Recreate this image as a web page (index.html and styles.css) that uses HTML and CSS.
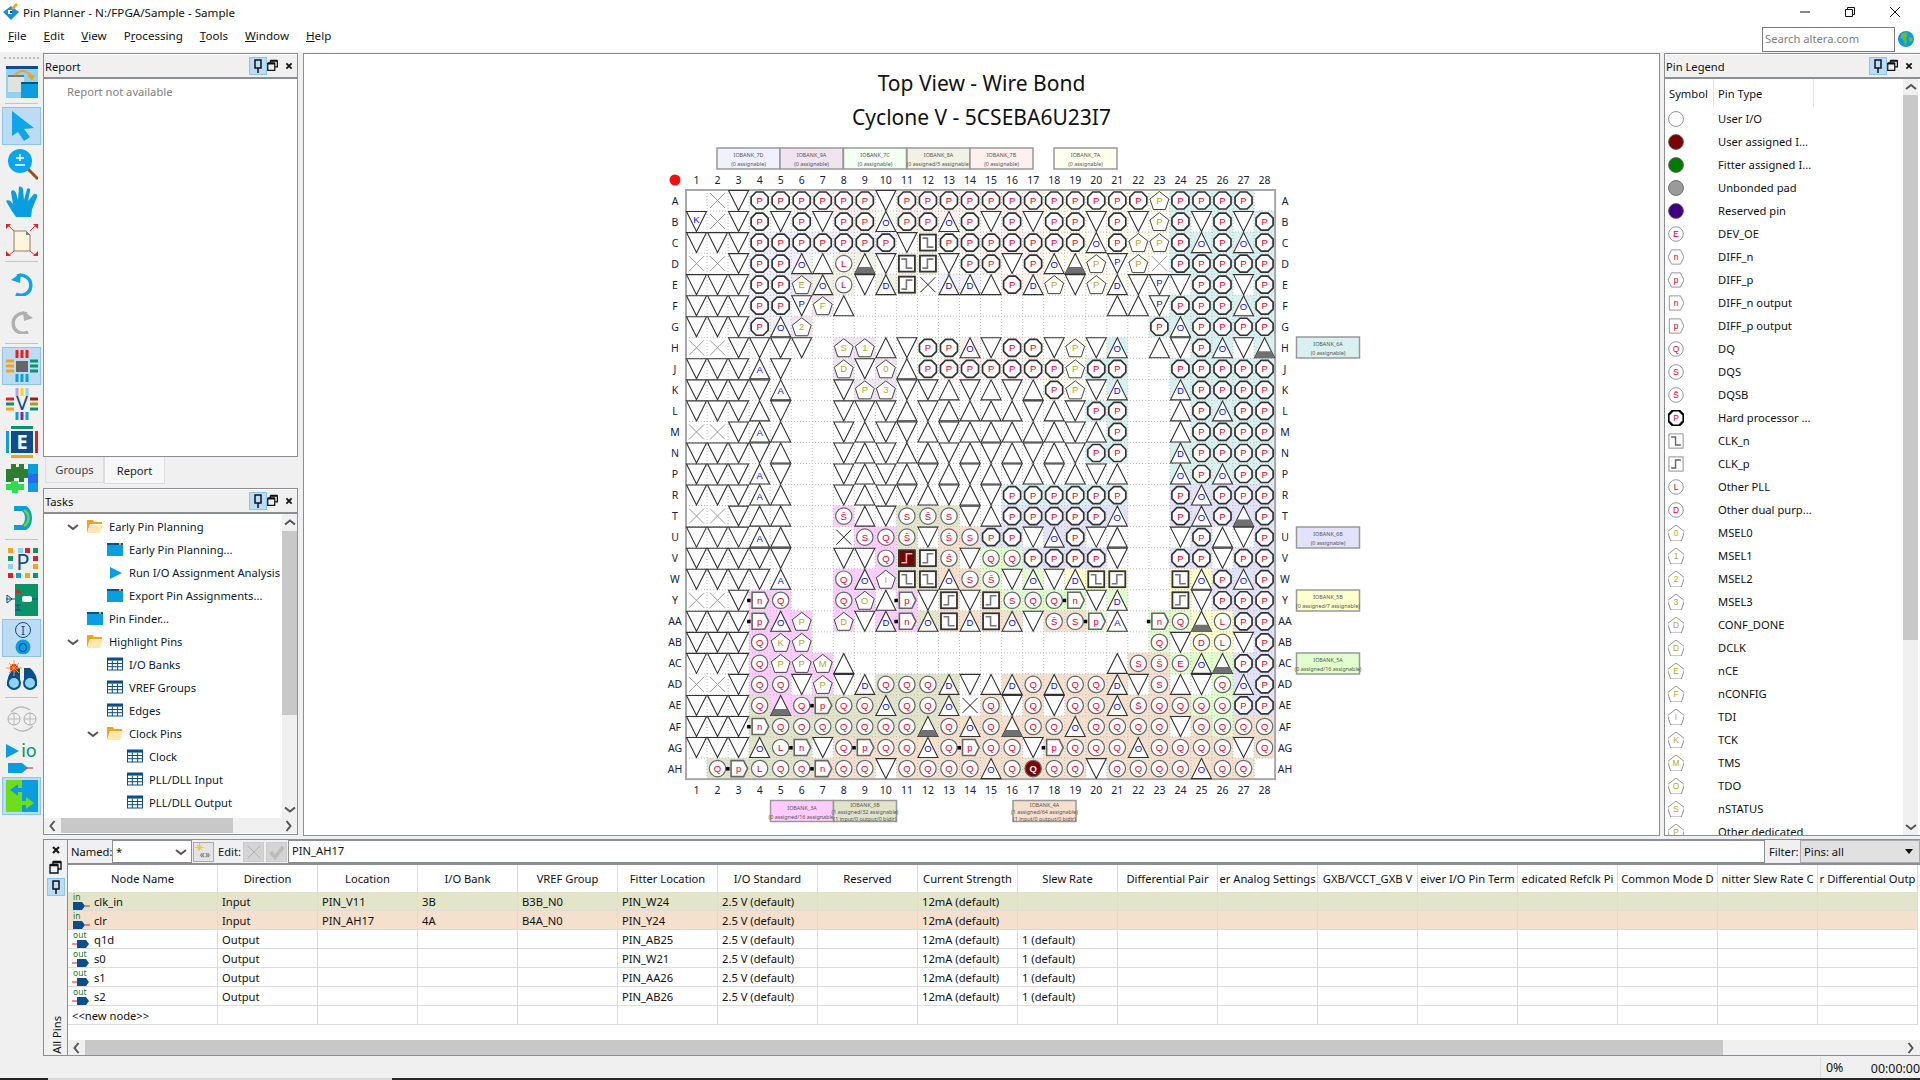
FILE: index.html
```html
<!DOCTYPE html>
<html lang="en">
<head>
<meta charset="utf-8">
<title>Pin Planner - N:/FPGA/Sample - Sample</title>
<link rel="stylesheet" href="styles.css">
</head>
<body>
<svg class="defs" width="0" height="0">
  <symbol id="i-pin" viewBox="0 0 16 16"><path d="M5 2H11V10H5ZM8 10V15" fill="none" stroke="#111" stroke-width="1.5"/></symbol>
  <symbol id="i-restore" viewBox="0 0 16 16"><path d="M5 5V2H13V9H10M2 5H10V13H2Z" fill="none" stroke="#111" stroke-width="1.4"/><path d="M2 5H10M5 2H13" stroke="#111" stroke-width="2.4"/></symbol>
  <symbol id="i-close" viewBox="0 0 16 16"><path d="M5 5L11 11M11 5L5 11" stroke="#111" stroke-width="2"/></symbol>
  <symbol id="i-up" viewBox="0 0 14 14"><path d="M2 9L7 5L12 9" fill="none" stroke="#555" stroke-width="2"/></symbol>
  <symbol id="i-down" viewBox="0 0 14 14"><path d="M2 5L7 9L12 5" fill="none" stroke="#555" stroke-width="2"/></symbol>
  <symbol id="i-left" viewBox="0 0 14 14"><path d="M9 2L5 7L9 12" fill="none" stroke="#555" stroke-width="2"/></symbol>
  <symbol id="i-right" viewBox="0 0 14 14"><path d="M5 2L9 7L5 12" fill="none" stroke="#555" stroke-width="2"/></symbol>
  <symbol id="i-folder" viewBox="0 0 16 16"><path d="M0 1H6L7 3H15V5H3L0 14Z" fill="#f7a11a"/><path d="M3 6H16L13 14H0Z" fill="#fde9b0"/></symbol>
  <symbol id="i-task" viewBox="0 0 16 16"><rect y="1" width="16" height="13" fill="#0a9de0"/><rect y="1" width="16" height="2" fill="#0a4f8c"/><rect x="12" y="1" width="2" height="2" fill="#f7a11a"/></symbol>
  <symbol id="i-play" viewBox="0 0 16 16"><path d="M3 2L15 8L3 14Z" fill="#0a9de0"/></symbol>
  <symbol id="i-table" viewBox="0 0 16 16"><rect x=".5" y="1" width="15" height="12" fill="#fff" stroke="#0a4f8c"/><rect y="1" width="16" height="2.6" fill="#0a4f8c"/><path d="M0 6.5H16M0 9.7H16M5.3 3.6V13M10.6 3.6V13" stroke="#0a4f8c"/></symbol>
</svg>

<div class="app">
  <header class="titlebar">
    <svg class="logo" viewBox="0 0 18 18"><path d="M9 3L17 9L9 17L1 9Z" fill="#1a8fd8"/><rect x="6" y="7" width="4" height="4" fill="#fff"/><rect x="8" y="8" width="2" height="2" fill="#0a4f8c"/><path d="M10 6L15 1" stroke="#f7a11a" stroke-width="2.5"/></svg>
    <span class="app-title">Pin Planner - N:/FPGA/Sample - Sample</span>
    <div class="winbtns">
      <svg class="winbtn" viewBox="0 0 10 10"><path d="M0 5H10" stroke="#111"/></svg>
      <svg class="winbtn" viewBox="0 0 10 10"><path d="M.5 2.5H7.5V9.5H.5ZM2.5 2.5V.5H9.5V7.5H7.5" fill="none" stroke="#111"/></svg>
      <svg class="winbtn" viewBox="0 0 10 10"><path d="M0 0L10 10M10 0L0 10" stroke="#111"/></svg>
    </div>
  </header>

  <nav class="menubar">
    <span class="menu"><u>F</u>ile</span>
    <span class="menu"><u>E</u>dit</span>
    <span class="menu"><u>V</u>iew</span>
    <span class="menu">P<u>r</u>ocessing</span>
    <span class="menu"><u>T</u>ools</span>
    <span class="menu"><u>W</u>indow</span>
    <span class="menu"><u>H</u>elp</span>
    <div class="search">Search altera.com</div>
    <svg class="globe" viewBox="0 0 16 16"><circle cx="8" cy="8" r="8" fill="#0a9de0"/><path d="M3 3L8 1L10 4L8 7L9 11L7 15L6 10L3 7ZM11 6L15 7L14 11L11 10Z" fill="#6dbb2d"/></svg>
  </nav>

  <div class="workspace">
    <aside class="toolbar">
      <div class="grip"></div>
      <div class="tool"><svg class="ti" viewBox="0 0 32 32"><rect width="32" height="32" fill="#8fd3f4"/><rect width="32" height="3" fill="#0a4f8c"/><rect x="2" y="9" width="16" height="17" fill="#e2e2dc"/><rect x="2" y="9" width="16" height="2" fill="#777"/><rect x="15" y="16" width="17" height="16" fill="#0a9de0"/><rect x="15" y="16" width="17" height="2" fill="#0a4f8c"/><path d="M9 9Q16 1 25 9" fill="none" stroke="#f7a11a" stroke-width="2"/><path d="M21 9L29 9L26 15Z" fill="#f7a11a"/></svg></div>
      <div class="sep"></div>
      <div class="tool on"><svg class="ti" viewBox="0 0 32 32"><path d="M6 1V26L12 22L18 31L24 27L18 19L28 18Z" fill="#0ea5e9"/></svg></div>
      <div class="tool"><svg class="ti" viewBox="0 0 32 32"><path d="M22 21L32 31" stroke="#a0491a" stroke-width="3"/><circle cx="14" cy="13" r="12" fill="#0aa5ee"/><path d="M14 6V13M10 10H18M9 17H19" stroke="#fff" stroke-width="1.5"/></svg></div>
      <div class="tool"><svg class="ti" viewBox="0 0 32 32"><path d="M10 31C6 26 3 20 0 15C2 13 5 15 7 18L5 6C6 3 9 4 10 7L12 14L13 1C15 0 16 1 17 3L18 14L21 3C23 1 25 3 24 5L22 15L28 8C30 7 32 9 31 11L27 21C25 25 26 28 25 31Z" fill="#0a9de0"/></svg></div>
      <div class="tool"><svg class="ti" viewBox="0 0 32 32"><path d="M8 7H20L24 11V27H8Z" fill="#fdf6dd" stroke="#96786a"/><path d="M20 7L24 11H20Z" fill="#96786a"/><path d="M8 7L2 1M24 7L30 1M8 27L2 32M24 27L30 32" stroke="#f03030"/><path d="M0 0H5L0 5ZM32 0H27L32 5ZM0 32H5L0 27ZM32 32H27L32 27Z" fill="#e82020"/></svg></div>
      <div class="sep"></div>
      <div class="tool"><svg class="ti small" viewBox="0 0 24 24"><path d="M7 4A10 10 0 1 1 6 22" fill="none" stroke="#0aa5ee" stroke-width="3.4"/><path d="M1 8L11 1L10 11Z" fill="#0aa5ee"/></svg></div>
      <div class="tool"><svg class="ti small" viewBox="0 0 24 24"><path d="M17 4A10 10 0 1 0 18 22" fill="none" stroke="#b0b0b0" stroke-width="3.4"/><path d="M23 8L13 1L14 11Z" fill="#b0b0b0"/></svg></div>
      <div class="sep"></div>
      <div class="tool on"><svg class="ti" viewBox="0 0 32 32"><rect x="10" y="11" width="12" height="11" fill="#666"/><path d="M11 0V8M16 0V8M21 0V8" stroke="#e81c24" stroke-width="3"/><path d="M11 24V32M16 24V32M21 24V32" stroke="#0a9de0" stroke-width="3"/><path d="M0 11H8M0 16H8M0 21H8" stroke="#f7a11a" stroke-width="3"/><path d="M24 11H32M24 16H32M24 21H32" stroke="#0a9268" stroke-width="3"/></svg></div>
      <div class="tool"><svg class="ti" viewBox="0 0 32 32"><path d="M11 0V8" stroke="#c79ae0" stroke-width="3"/><path d="M16 0V8" stroke="#f8d808" stroke-width="3"/><path d="M21 0V8" stroke="#8fd3f4" stroke-width="3"/><path d="M0 11H8" stroke="#e81c24" stroke-width="3"/><path d="M0 16H8" stroke="#0a9268" stroke-width="3"/><path d="M0 21H8" stroke="#f7a11a" stroke-width="3"/><path d="M24 11H32" stroke="#a01a1a" stroke-width="3"/><path d="M24 16H32" stroke="#a0a020" stroke-width="3"/><path d="M24 21H32" stroke="#0a9268" stroke-width="3"/><path d="M11 24V32" stroke="#0a9de0" stroke-width="3"/><path d="M16 24V32" stroke="#7030a0" stroke-width="3"/><path d="M21 24V32" stroke="#0a9de0" stroke-width="3"/><text class="ictext navy" x="16" y="22" font-size="20">V</text></svg></div>
      <div class="tool"><svg class="ti" viewBox="0 0 32 32"><rect x="5" y="5" width="22" height="22" fill="#0a4f8c"/><rect x="5" width="22" height="3" fill="#0a9268"/><rect x="5" y="29" width="22" height="3" fill="#f7a11a"/><rect y="5" width="3" height="22" fill="#0a9de0"/><rect x="29" y="5" width="3" height="22" fill="#e81c24"/><text class="ictext white" x="16" y="23" font-size="20">E</text></svg></div>
      <div class="tool"><svg class="ti" viewBox="0 0 32 32"><rect x="22" width="10" height="28" fill="#0a9de0"/><rect x="22" y="10" width="10" height="9" fill="#2a6af0"/><path d="M0 5H5V0H10V3H13V0H18V5H22V14H18V18H13V14H8V18H0Z" fill="#2e7d32"/><path d="M0 20H5V17H12V20H18V26H12V29H6V26H0Z" fill="#28e04a"/></svg></div>
      <div class="tool"><svg class="ti" viewBox="0 0 32 32"><path d="M8 4H20C28 8 28 24 20 28H8V23H16C20 20 20 12 16 9H8Z" fill="#0a9de0"/><path d="M18 8C24 12 24 20 18 24" fill="none" stroke="#6fdc1c" stroke-width="2.5"/></svg></div>
      <div class="sep"></div>
      <div class="tool"><svg class="ti" viewBox="0 0 32 32"><rect x="2" y="2" width="5" height="5" fill="#f7a11a"/><rect x="12" y="2" width="5" height="5" fill="#8fd3f4"/><rect x="19" y="2" width="5" height="5" fill="#e81c24"/><rect x="27" y="2" width="5" height="5" fill="#0a9268"/><rect x="2" y="10" width="5" height="5" fill="#0a9268"/><rect x="27" y="10" width="5" height="5" fill="#e81c24"/><rect x="2" y="18" width="5" height="5" fill="#8fd3f4"/><rect x="27" y="18" width="5" height="5" fill="#f7a11a"/><rect x="2" y="27" width="5" height="5" fill="#e81c24"/><rect x="10" y="27" width="5" height="5" fill="#0a9de0"/><rect x="19" y="27" width="5" height="5" fill="#f7a11a"/><rect x="27" y="27" width="5" height="5" fill="#0a9268"/><text class="ictext navy" x="17" y="24" font-size="22">P</text></svg></div>
      <div class="tool"><svg class="ti" viewBox="0 0 32 32"><rect x="9" width="23" height="32" fill="#0a9268"/><path d="M0 15H9M18 15H32" stroke="#0a4f8c"/><path d="M1 11L6 15L1 19Z" fill="none" stroke="#0a4f8c"/><rect x="16" y="12" width="10" height="6" rx="2" fill="#fff"/><path d="M12 5L15 9H9Z" fill="#e81c24"/><path d="M9 21H15M12 21V26M9 26H15" stroke="#0a4f8c"/></svg></div>
      <div class="tool on"><svg class="ti" viewBox="0 0 32 32"><circle cx="17" cy="8" r="7.5" fill="none" stroke="#0a4f8c"/><text class="ictext navy" x="17" y="12.5" font-size="12">I</text><circle cx="17" cy="25" r="7.5" fill="#0a9de0"/><text class="ictext navy" x="17" y="29.5" font-size="12">O</text></svg></div>
      <div class="tool"><svg class="ti" viewBox="0 0 32 32"><path d="M8 8H14V26H1Q1 14 8 8ZM18 8H24Q32 14 31 26H18Z" fill="#0a4f8c"/><circle cx="8" cy="23" r="6" fill="#8fd3f4" stroke="#0a4f8c" stroke-width="2"/><circle cx="24" cy="23" r="6" fill="#8fd3f4" stroke="#0a4f8c" stroke-width="2"/><circle cx="8" cy="8" r="4" fill="#e81c24"/><path d="M8 0V16M0 8H16M3 3L13 13M13 3L3 13" stroke="#f7a11a"/></svg></div>
      <div class="sep"></div>
      <div class="tool"><svg class="ti" viewBox="0 0 32 32"><circle cx="8" cy="15" r="6" fill="none" stroke="#aaa"/><circle cx="24" cy="15" r="6" fill="none" stroke="#aaa"/><path d="M2 15H14M8 9V21M18 15H30M24 9V21" stroke="#bbb"/><path d="M5 8Q14 -1 24 6M27 22Q18 31 8 24" fill="none" stroke="#bbb" stroke-width="1.5"/></svg></div>
      <div class="tool"><svg class="ti" viewBox="0 0 32 32"><path d="M0 2L13 9L0 16Z" fill="#0a9de0"/><text class="ictext green" x="23" y="15" font-size="18">io</text><path d="M2 21H16L22 26L16 31H2Z" fill="#0a9de0"/><path d="M20 26H27" stroke="#e81c24"/></svg></div>
      <div class="tool on"><svg class="ti" viewBox="0 0 32 32"><rect width="16" height="32" fill="#6fdc1c"/><rect x="16" width="16" height="32" fill="#0a9de0"/><path d="M4 10L12 4V8H20V12H12V16Z" fill="#0a9de0"/><path d="M28 23L20 17V21H16V25H20V29Z" fill="#6fdc1c"/></svg></div>
    </aside>

    <div class="stage">
      <div class="upper">
        <div class="leftcol">
          <section class="panel report">
            <div class="panel-head"><span class="panel-title">Report</span>
              <span class="pinbtn"><svg class="hi"><use href="#i-pin"/></svg></span><svg class="hi"><use href="#i-restore"/></svg><svg class="hi"><use href="#i-close"/></svg></div>
            <div class="report-body">Report not available</div>
          </section>
          <div class="tabs"><span class="tab">Groups</span><span class="tab sel">Report</span></div>
          <section class="panel tasks">
            <div class="panel-head"><span class="panel-title">Tasks</span>
              <span class="pinbtn"><svg class="hi"><use href="#i-pin"/></svg></span><svg class="hi"><use href="#i-restore"/></svg><svg class="hi"><use href="#i-close"/></svg></div>
            <div class="tasks-main">
              <div class="tree">
                <div class="node l0"><svg class="caret"><use href="#i-down"/></svg><svg class="ni"><use href="#i-folder"/></svg>Early Pin Planning</div>
                <div class="node l1"><span class="caret"></span><svg class="ni"><use href="#i-task"/></svg>Early Pin Planning...</div>
                <div class="node l1"><span class="caret"></span><svg class="ni"><use href="#i-play"/></svg>Run I/O Assignment Analysis</div>
                <div class="node l1"><span class="caret"></span><svg class="ni"><use href="#i-task"/></svg>Export Pin Assignments...</div>
                <div class="node l0"><span class="caret"></span><svg class="ni"><use href="#i-task"/></svg>Pin Finder...</div>
                <div class="node l0"><svg class="caret"><use href="#i-down"/></svg><svg class="ni"><use href="#i-folder"/></svg>Highlight Pins</div>
                <div class="node l1"><span class="caret"></span><svg class="ni"><use href="#i-table"/></svg>I/O Banks</div>
                <div class="node l1"><span class="caret"></span><svg class="ni"><use href="#i-table"/></svg>VREF Groups</div>
                <div class="node l1"><span class="caret"></span><svg class="ni"><use href="#i-table"/></svg>Edges</div>
                <div class="node l1"><svg class="caret"><use href="#i-down"/></svg><svg class="ni"><use href="#i-folder"/></svg>Clock Pins</div>
                <div class="node l2"><span class="caret"></span><svg class="ni"><use href="#i-table"/></svg>Clock</div>
                <div class="node l2"><span class="caret"></span><svg class="ni"><use href="#i-table"/></svg>PLL/DLL Input</div>
                <div class="node l2"><span class="caret"></span><svg class="ni"><use href="#i-table"/></svg>PLL/DLL Output</div>
              </div>
              <div class="vscroll tasks-v"><svg class="arrow"><use href="#i-up"/></svg><div class="thumb"></div><svg class="arrow"><use href="#i-down"/></svg></div>
            </div>
            <div class="hscroll tasks-h"><svg class="arrow"><use href="#i-left"/></svg><div class="hthumb"></div><svg class="arrow"><use href="#i-right"/></svg></div>
          </section>
        </div>

        <main class="chip-view">
          <h1 class="chip-title">Top View - Wire Bond</h1>
          <h2 class="chip-title second">Cyclone V - 5CSEBA6U23I7</h2>
          <svg id="chip" class="chip" viewBox="304 54 1355 781"></svg>
        </main>

        <aside class="panel legend">
          <div class="panel-head"><span class="panel-title">Pin Legend</span>
            <span class="pinbtn"><svg class="hi"><use href="#i-pin"/></svg></span><svg class="hi"><use href="#i-restore"/></svg><svg class="hi"><use href="#i-close"/></svg></div>
          <div class="legend-main">
            <div class="legend-list">
              <div class="legend-cols"><span class="lc-sym">Symbol</span><span class="lc-type">Pin Type</span></div>
              <div id="legend"></div>
            </div>
            <div class="vscroll legend-v"><svg class="arrow"><use href="#i-up"/></svg><div class="thumb"></div><svg class="arrow"><use href="#i-down"/></svg></div>
          </div>
        </aside>
      </div>

      <section class="dock">
        <div class="dock-side">
          <svg class="hi"><use href="#i-close"/></svg>
          <svg class="hi"><use href="#i-restore"/></svg>
          <span class="pinbtn"><svg class="hi"><use href="#i-pin"/></svg></span>
          <span class="vlabel">All Pins</span>
        </div>
        <div class="dock-main">
          <div class="dock-bar">
            <span class="lbl named">Named:</span>
            <div class="combo"><span>*</span><svg class="arrow"><use href="#i-down"/></svg></div>
            <div class="wiz"><svg viewBox="0 0 20 20" class="wiz-i"><path d="M5 0V9M0 5H10M2 2L8 8M8 2L2 8" stroke="#f7c11a"/><text class="ictext grey" x="11" y="17" font-size="11">«»</text></svg></div>
            <span class="lbl edit">Edit:</span>
            <div class="gbtn"><svg viewBox="0 0 20 20" class="wiz-i"><path d="M3 3L17 17M17 3L3 17" stroke="#aaa"/></svg></div>
            <div class="gbtn second"><svg viewBox="0 0 20 20" class="wiz-i"><path d="M3 10L8 16L17 4" fill="none" stroke="#bbb" stroke-width="4"/></svg></div>
            <div class="valbox">PIN_AH17</div>
            <span class="lbl flt">Filter:</span>
            <div class="filter"><span>Pins: all</span><span class="tri"></span></div>
          </div>
          <div class="table-wrap">
            <table class="pins">
              <thead><tr>
                <th class="cname"><span>Node Name</span></th><th><span>Direction</span></th><th><span>Location</span></th><th><span>I/O Bank</span></th><th><span>VREF Group</span></th><th><span>Fitter Location</span></th><th><span>I/O Standard</span></th><th><span>Reserved</span></th><th><span>Current Strength</span></th><th><span>Slew Rate</span></th><th><span>Differential Pair</span></th><th><span>er Analog Settings</span></th><th><span>GXB/VCCT_GXB V</span></th><th><span>eiver I/O Pin Term</span></th><th><span>edicated Refclk Pi</span></th><th><span>Common Mode D</span></th><th><span>nitter Slew Rate C</span></th><th><span>r Differential Outp</span></th>
              </tr></thead>
              <tbody id="pinrows"></tbody>
            </table>
          </div>
          <div class="hscroll dock-h"><svg class="arrow"><use href="#i-left"/></svg><div class="hthumb"></div><svg class="arrow"><use href="#i-right"/></svg></div>
        </div>
      </section>
    </div>
  </div>

  <footer class="status"><span class="st-pct">0%</span><span class="st-time">00:00:00</span></footer>
  <div class="taskstrip"><span class="ts-a"></span><span class="ts-b"></span><span class="ts-c"></span></div>
</div>
<script src="script.js"></script>
</body>
</html>
```

FILE: styles.css
```css
* { box-sizing: border-box; }
html, body { margin: 0; padding: 0; width: 1920px; height: 1080px; overflow: hidden; }
body { background: #f0f0f0; font-family: "Noto Sans", "Open Sans", sans-serif; font-size: 11.2px; color: #111; }
.defs { position: absolute; }
.app { display: flex; flex-direction: column; height: 1080px; }

/* title + menu */
.titlebar { height: 24px; background: #fff; display: flex; align-items: center; padding-left: 2px; font-size: 11.6px; }
.logo { width: 18px; height: 18px; margin-right: 3px; }
.winbtns { margin-left: auto; display: flex; padding-right: 20px; gap: 35px; }
.winbtn { width: 10px; height: 10px; }
.menubar { height: 28px; background: #fff; display: flex; align-items: flex-start; padding: 3px 0 0 8px; position: relative; font-size: 11.6px; }
.menu { margin-right: 17px; line-height: 18px; }
.search { margin-left: auto; width: 133px; height: 25px; border: 1px solid #7a7a7a; color: #808080; line-height: 22px; padding-left: 2px; font-size: 11.2px; }
.globe { width: 16px; height: 16px; margin: 4px 6px 0 3px; }

.workspace { flex: 1; display: flex; min-height: 0; }

/* left tools */
.toolbar { width: 43px; padding-top: 1px; display: flex; flex-direction: column; flex: none; }
.grip { height: 6px; margin: 4px 4px 0; border-top: 2px dotted #bbb; flex: none; }
.tool { height: 38px; width: 39px; margin-left: 2px; display: flex; align-items: center; justify-content: center; border: 1px solid transparent; flex: none; }
.tool.on { background: #bcdcf5; border-color: #8cc4f0; }
.ti { width: 32px; height: 32px; }
.ti.small { width: 24px; height: 24px; }
.sep { margin: 2px 5px 3px; border-top: 1px solid #c4c4c4; height: 1px; flex: none; }
.ictext { font-family: "Noto Sans", sans-serif; text-anchor: middle; font-weight: 400; }
.navy { fill: #0a4f8c; }
.white { fill: #fff; font-weight: 700; }
.green { fill: #0a9268; }
.grey { fill: #666; }

.stage { flex: 1; display: flex; flex-direction: column; min-width: 0; }
.upper { height: 783px; margin-top: 1px; display: flex; flex: none; }
.leftcol { width: 255px; display: flex; flex-direction: column; flex: none; margin-right: 5px; }

.panel { background: #fff; border: 1px solid #8b8e93; display: flex; flex-direction: column; min-height: 0; }
.panel-head { height: 24px; background: #f0f0f0; border-bottom: 2px solid #8b8e93; margin-top: 1px; display: flex; align-items: center; flex: none; padding-right: 1px; }
.panel-title { margin-right: auto; padding: 2px 0 0 1px; line-height: 20px; }
.hi { width: 16px; height: 16px; flex: none; display: block; }
.pinbtn { width: 16px; height: 16px; background: #bcdcf5; outline: 1px solid #8cc4f0; display: block; flex: none; }
.panel-head > .hi { width: 14px; margin-left: 0; }
.panel-head > .hi + .hi { margin-left: 2px; }

.report { height: 404px; flex: none; }
.report-body { color: #808080; padding: 5px 0 0 23px; }
.tabs { height: 27px; display: flex; padding-left: 2px; flex: none; }
.tab { height: 26px; width: 59px; border: 1px solid #ddd; border-top: 0; line-height: 26px; text-align: center; color: #444; background: #f0f0f0; }
.tab.sel { width: 61px; height: 27px; background: #f7f7f7; color: #222; line-height: 28px; }
.tasks { margin-top: 4px; height: 347px; flex: none; }
.tasks-main { flex: 1; display: flex; min-height: 0; }
.tree { flex: 1; min-width: 0; overflow: hidden; padding-top: 1px; color: #0a1a2a; }
.node { height: 23px; display: flex; align-items: center; white-space: nowrap; }
.l0 { padding-left: 22px; }
.l1 { padding-left: 42px; }
.l2 { padding-left: 62px; }
.caret { width: 14px; height: 14px; margin-right: 7px; flex: none; }
.ni { width: 16px; height: 16px; margin-right: 6px; flex: none; }
.vscroll { width: 15px; background: #f0f0f0; display: flex; flex-direction: column; flex: none; align-items: center; }
.arrow { width: 14px; height: 14px; flex: none; }
.tasks-v .arrow { height: 17px; }
.tasks-v .thumb { height: 184px; width: 15px; background: #c8c8c8; margin-bottom: auto; }
.legend-v .thumb { height: 545px; width: 15px; background: #c8c8c8; margin-bottom: auto; }
.legend-v .arrow { height: 16px; }
.hscroll { height: 15px; background: #f0f0f0; display: flex; align-items: center; flex: none; }
.hthumb { height: 15px; background: #c8c8c8; margin-right: auto; }
.tasks-h .arrow { width: 17px; }
.tasks-h .hthumb { width: 172px; }
.tasks-h { margin-bottom: 1px; }

/* centre */
.chip-view { width: 1357px; flex: none; margin-right: 4px; background: #fff; border: 1px solid #8b8e93; position: relative; overflow: hidden; }
.chip-title { margin: 15px 0 0; font-size: 21px; font-weight: 400; text-align: center; line-height: 28px; }
.chip-title.second { margin-top: 6px; }
.chip { position: absolute; left: 0; top: 0; width: 1355px; height: 781px; }
.axis { font-size: 10.5px; text-anchor: middle; fill: #14233a; }
.dots { stroke: #bdbdbd; stroke-width: 1; stroke-dasharray: 1 2; }
.frame { fill: none; stroke: #a8a8a8; stroke-width: 2; }
.pin { fill: #fff; stroke: #333; stroke-width: 1.1; }
.pin.circle { stroke: #666; stroke-width: 1.2; }
.pin.octa { stroke: #333; stroke-width: 1.7; }
.pin.pent { stroke: #444; stroke-width: 1; }
.pin.diff { stroke: #666; stroke-width: 1.6; }
.pin.clk { stroke: #333; stroke-width: 1.8; }
.pin.hot { fill: #7b0000; }
.half { fill: #707070; }
.xline { stroke: #999; stroke-width: 1; }
.xline.dark { stroke: #222; }
.step { fill: none; stroke: #777; stroke-width: 1.6; }
.step.hot { stroke: #f0b8b8; }
.sq { fill: #000; }
.g { font-family: "Liberation Sans", sans-serif; font-size: 9.5px; text-anchor: middle; }
.g-r { fill: #e8001c; }
.g-b { fill: #0a0aee; }
.g-y { fill: #b8a818; }
.g-w { fill: #fff; font-weight: 700; }
.bankbox { stroke: #999; stroke-width: 1.5; }
.banktext { font-size: 5.4px; text-anchor: middle; fill: #555; }

/* legend */
.legend { width: 256px; flex: none; border-right: 0; }
.legend .panel-head { padding-right: 4px; }
.legend-main { flex: 1; display: flex; min-height: 0; }
.legend-list { flex: 1; min-width: 0; overflow: hidden; }
.legend-cols { height: 28px; display: flex; align-items: center; color: #111; }
.lc-sym { width: 49px; height: 100%; padding-left: 4px; line-height: 29px; border-right: 1px solid #e4e4e4; }
.lc-type { width: 100px; height: 100%; padding-left: 4px; line-height: 29px; border-right: 1px solid #e4e4e4; }
.lrow { height: 23px; display: flex; align-items: center; padding-left: 3px; white-space: nowrap; }
.lsym { width: 16px; height: 16px; margin-right: 34px; flex: none; }
.lsym .pin { stroke: #888; stroke-width: 1; }
.lsym .pin.octa { stroke: #000; stroke-width: 2.6; }
.lsym .pin.filled { stroke: #666; }
.lsym .sq { display: none; }
.lsym .step { stroke: #666; }
.legend-v { margin-right: 2px; }
.fill-user { fill: #7b0000 !important; }
.fill-fitter { fill: #007a00 !important; }
.fill-unbonded { fill: #9a9a9a !important; }
.fill-reserved { fill: #400080 !important; }

/* dock */
.dock { height: 217px; margin-top: 3px; flex: none; display: flex; border-top: 1px solid #8b8e93; border-bottom: 1px solid #8b8e93; border-left: 1px solid #8b8e93; }
.dock-side { width: 24px; flex: none; display: flex; flex-direction: column; align-items: center; padding-top: 2px; gap: 2px; position: relative; border-right: 1px solid #8b8e93; }
.dock-side .pinbtn { margin: 1px 0 0; }
.vlabel { position: absolute; bottom: 1px; left: 5px; writing-mode: vertical-rl; transform: rotate(180deg); line-height: 16px; }
.dock-main { flex: 1; min-width: 0; display: flex; flex-direction: column; background: #f0f0f0; }
.dock-bar { height: 25px; display: flex; align-items: stretch; border-bottom: 2px solid #8b8e93; flex: none; }
.lbl { line-height: 24px; flex: none; }
.lbl.named { width: 44px; padding-left: 3px; }
.lbl.edit { width: 29px; padding-left: 4px; }
.lbl.flt { width: 35px; padding-left: 4px; }
.combo { width: 80px; background: #fff; border: 1px solid #8b8e93; display: flex; align-items: center; justify-content: space-between; padding: 0 3px; flex: none; }
.wiz { width: 21px; background: #e4e4e4; border: 1px solid #aaa; margin: 2px 0 1px 1px; display: flex; align-items: center; justify-content: center; flex: none; }
.wiz-i { width: 18px; height: 18px; }
.gbtn { width: 21px; background: #d4d4d4; border: 1px solid #ccc; margin: 2px 0 1px 0; display: flex; align-items: center; justify-content: center; flex: none; }
.gbtn.second { margin-left: 2px; }
.valbox { flex: 1; background: #fff; border: 1px solid #8b8e93; margin-left: 1px; padding-left: 3px; line-height: 20px; }
.filter { width: 120px; background: #e1e1e1; border: 1px solid #aaa; display: flex; align-items: center; justify-content: space-between; padding: 0 6px 0 3px; flex: none; }
.tri { width: 0; height: 0; border-left: 4px solid transparent; border-right: 4px solid transparent; border-top: 5px solid #111; }
.table-wrap { flex: 1; background: #fff; overflow: hidden; min-height: 0; }
.pins { table-layout: fixed; border-collapse: separate; border-spacing: 0; width: 1850px; }
.pins th, .pins td { width: 100px; padding: 0; border-right: 1px solid #dcdcdc; }
.pins .cname { width: 150px; }
.pins th { height: 27px; font-weight: 400; overflow: hidden; }
.pins th span { display: flex; justify-content: center; white-space: nowrap; width: 99px; overflow: hidden; }
.pins .cname span { width: 149px; }
.pins td { height: 19px; border-bottom: 1px solid #dcdcdc; padding: 2px 0 0 4px; white-space: nowrap; overflow: hidden; line-height: 16px; }
.tname { display: flex; align-items: center; gap: 4px; height: 16px; }
.dirsvg { width: 18px; height: 18px; flex: none; }
.dirtext { font-family: "Noto Sans", sans-serif; font-size: 8.5px; fill: #1a7a2a; }
.r-3b td { background: #e3e4ca; }
.r-4a td { background: #f5dfcd; }
.dock-h { margin-right: 1px; }
.dock-h .arrow { width: 17px; }
.dock-h .hthumb { width: 1638px; }

/* status */
.status { height: 21px; display: flex; align-items: center; flex: none; padding-left: 1820px; font-size: 12.4px; }
.st-pct { width: 51px; padding: 1px 0 0 5px; border-left: 1px solid #ddd; line-height: 20px; }
.st-time { padding-top: 1px; }
.taskstrip { height: 2px; display: flex; flex: none; }
.ts-a { width: 48px; background: #222; }
.ts-b { width: 344px; background: #d8d8d8; }
.ts-c { flex: 1; background: #2a2a2a; }
```

FILE: script.js
```js
var W = 21.04, X0 = 686, Y0 = 190;
var ROWS = [
 ["A",". x v P P P P P P v P P P P P P P P P P P P 5P P P P P .","...ccffffffffffffgggggghhhh."],
 ["B","K x v P v P v P P o P P o P v P v P P v P v 5P P v P v P","...cccfffcfffcfffgggggghhhhh"],
 ["C","v v v P P P P P P P v cn P P P P P P P o P 5P 5P P o P o P","...aaaaaaaaecffffgggggghhhhh"],
 ["D","x x v P P o ^ L h v cn cp v P P v P o h 5P y 5P x P P P P P","...aaaeeeeee.cfffgggggghhhhh"],
 ["E","v v v P P 5E o L v d cp X d d ^ P d 5P v 5P d v y v P P v P","...aabeeeee.aafffgggggghhhhh"],
 ["F","v v v P P y 5F ^ . . . . . . . . . . . . ^ ^ y P P P o P","...aabb...............ghhhhh"],
 ["G","v v v P o 52 . . . . . . . . . . . . . . . . P o P P P P","...aab................hhhhhh"],
 ["H","x x v v v v . 5S 51 ^ v P P o v P P v 5P v o . ^ v P o v h",".......bbb.ccf.fggg.h...hhhh"],
 ["J","v v v A v . . 5D v 50 ^ P P P P P P P 5P P P . . P P P P P",".......b.b.cfffffgghh..hhhhh"],
 ["K","v v v v A . . v 5P 53 v v ^ v ^ v ^ P 5P v d . . d P P P P","........bb.......gg.h..hhhhh"],
 ["L","v v v ^ v . . v v v ^ v ^ ^ ^ ^ v ^ v P P . . ^ P o P P","...................hh..hhhhh"],
 ["M","x x v A ^ . . v ^ v v ^ v ^ ^ ^ ^ ^ v ^ P . . ^ P P P P","....................h..hhhhh"],
 ["N","v v v v ^ . . v ^ v ^ ^ v ^ v ^ v ^ v P P . . d P P P P","...................hh..hhhhh"],
 ["P","v v v A v . . v ^ v ^ v ^ v ^ v ^ v ^ v ^ . . o P o P P",".......................hhhhh"],
 ["R","v v v A ^ . . v ^ v v ^ v ^ v P P P P P P . . P o P P P","...............hhhhhh..iiiii"],
 ["T","x x v ^ ^ . . s ^ v S s S v ^ P P P P P o . . P o P h P",".......n..mmm..iiiiii..iiiii"],
 ["U","v v v A ^ . . X S Q s v s S P P v o P v ^ . . v P ^ v P","........nnm.llii.ii.i...i..i"],
 ["V","v v v v v . . v v Q CP cp s v Q Q P P P P v . . P P v P P",".........nmml.kkiiii...ii.ii"],
 ["W","v v v v A . . Q o 5I cn cn o S s v o v d cn cp . . cn o P o P",".......nnnmmllk.k.jjj..jjiii"],
 ["Y","x x v N Q . . Q 5O ^ R v cp v cp S Q Q N v d . . cp v P P P","...nn..nnnn.l.lkkkk.k..j.iii"],
 ["AA","v v v R o 5P . 5D v d N o cn d cn o v s S R A . N Q h L P P","...nnn.n.nnmllll.llk..kkjjii"],
 ["AB","v v v Q 5K 5P . . . . . . . . . . . . . . . . Q v D L v P","...nnn................k.jj.i"],
 ["AC","v v v Q 5P 5P 5M ^ . . . . . . . . . . . . ^ S s E o h P P","...nnnn..............llkkkii"],
 ["AD","x x v Q Q v 5P v d Q Q Q d v ^ d Q d Q Q d v S ^ v Q o P","...nn.n..mmmm..llllll.l..kii"],
 ["AE","v v v Q h Q R Q Q o Q Q o X Q v Q v Q Q o s Q Q Q Q P P","...mnnmmmmmmm.l.l.llllllkkii"],
 ["AF","v v v N Q Q Q Q Q Q Q h Q o Q h Q Q o Q Q Q Q v Q Q Q Q","...mmmmmmmmmlllllllllll.lkll"],
 ["AG","v v v o L N v Q R Q Q o Q R Q Q v R Q Q Q o Q Q Q Q v Q","...mmmmlllllllllllllllllll.l"],
 ["AH",". Q R L Q Q N Q Q v Q Q Q Q o Q QQ Q Q v Q Q Q Q o Q Q .",".mmmmmlllllllllllllllllllll."]
];
var BANK = { a:"#f0f0ff", b:"#f0e4f0", c:"#f4fff4", e:"#f2f2e4", f:"#fff0f0", g:"#fffff0", h:"#d8f0f0", i:"#e2e2fa", j:"#ffffcc", k:"#e0ffcc", l:"#f5dfcd", m:"#e2e4ca", n:"#ffccff" };

function txt(t, cls, y) { return '<text class="g ' + cls + '" x="10.5" y="' + (y || 14) + '">' + t + '</text>'; }
function poly(pts, cls) { return '<polygon class="pin ' + (cls || '') + '" points="' + pts + '"/>'; }
var DOWN = "0.5,0.5 20.5,0.5 10.5,20.5", UP = "10.5,0.5 20.5,20.5 0.5,20.5";
var OCTA = "7,2 14,2 19,7 19,14 14,19 7,19 2,14 2,7", PENT = "10.5,1.5 20,9 16.5,19.5 4.5,19.5 1,9";
var OUTP = "3,2.5 15.5,2.5 19.5,10.5 15.5,18.5 3,18.5", HEX = "5.5,2.5 15.5,2.5 19.5,10.5 15.5,18.5 5.5,18.5 1.5,10.5";
function circ(cls) { return '<circle class="pin circle ' + (cls || '') + '" cx="10.5" cy="10.5" r="8.2"/>'; }
function clk(kind, hot) {
  return '<rect class="pin clk ' + (hot ? 'hot' : '') + '" x="2.5" y="2.5" width="16" height="16"/>' +
    '<path class="step ' + (hot ? 'hot' : '') + '" d="' + (kind == 'n' ? 'M5 6H10V15H16' : 'M5 15H10V6H16') + '"/>';
}
function sym(t) {
  var c = t.charAt(0);
  if (t == 'cn') return clk('n');
  if (t == 'cp') return clk('p');
  if (t == 'CP') return clk('p', true);
  if (t == 'QQ') return circ('hot') + txt('Q', 'g-w');
  if (t == 'hn') return poly(HEX, 'diff') + txt('n', 'g-r');
  if (t == 'hp') return poly(HEX, 'diff') + txt('p', 'g-r');
  if (c == '5') return poly(PENT, 'pent') + txt(t.charAt(1), 'g-y');
  switch (t) {
    case 'v': return poly(DOWN);
    case '^': return poly(UP);
    case 'h': return poly(UP) + '<polygon class="half" points="4,14 17,14 20.5,20.5 0.5,20.5"/>';
    case 'x': return '<path class="xline" d="M3 3L18 18M18 3L3 18"/>';
    case 'X': return '<path class="xline dark" d="M3 3L18 18M18 3L3 18"/>';
    case 'P': return poly(OCTA, 'octa') + txt('P', 'g-r');
    case 'Q': case 'S': case 'L': case 'E': case 'D': return circ() + txt(t, 'g-r');
    case 's': return circ() + txt('S\u0304', 'g-r');
    case 'o': return poly(UP) + txt('O', 'g-b', 15);
    case 'd': return poly(UP) + txt('D', 'g-b', 15);
    case 'A': return poly(UP) + txt('A', 'g-b', 15);
    case 'K': return poly(DOWN) + txt('K', 'g-b', 12);
    case 'y': return poly(DOWN) + txt('P', 'g-b', 12);
    case 'N': return '<rect class="sq" x="-2" y="9" width="3.5" height="3.5"/>' + poly(OUTP, 'diff') + txt('n', 'g-r');
    case 'R': return '<rect class="sq" x="-2" y="9" width="3.5" height="3.5"/>' + poly(OUTP, 'diff') + txt('p', 'g-r');
  }
  return '';
}
var WHITE_BG = { 'v':1, '^':1, 'x':1, 'X':1, 'K':1, 'y':1, 'A':1, '.':1 };

function buildChip() {
  var s = '', i, j, x;
  var H = W * 28, Wd = W * 28;
  ROWS.forEach(function (row, ri) {
    var toks = row[1].split(' '), banks = row[2];
    toks.forEach(function (t, ci) {
      var b = banks.charAt(ci);
      if (b != '.' && !WHITE_BG[t]) s += '<rect x="' + (X0 + ci * W) + '" y="' + (Y0 + ri * W) + '" width="' + W + '" height="' + W + '" fill="' + BANK[b] + '"/>';
    });
  });
  for (i = 1; i < 28; i++) {
    s += '<path class="dots" d="M' + (X0 + i * W) + ' ' + Y0 + 'V' + (Y0 + H) + '"/>';
    s += '<path class="dots" d="M' + X0 + ' ' + (Y0 + i * W) + 'H' + (X0 + Wd) + '"/>';
  }
  s += '<rect class="frame" x="' + X0 + '" y="' + Y0 + '" width="' + Wd + '" height="' + H + '"/>';
  ROWS.forEach(function (row, ri) {
    var toks = row[1].split(' ');
    var cy = Y0 + ri * W + W / 2 + 4;
    s += '<text class="axis" x="675" y="' + cy + '">' + row[0] + '</text>';
    s += '<text class="axis" x="1285" y="' + cy + '">' + row[0] + '</text>';
    toks.forEach(function (t, ci) {
      var inner = sym(t);
      if (inner) s += '<g transform="translate(' + (X0 + ci * W) + ' ' + (Y0 + ri * W) + ')">' + inner + '</g>';
    });
  });
  for (j = 1; j <= 28; j++) {
    x = X0 + (j - 1) * W + W / 2;
    s += '<text class="axis" x="' + x + '" y="184">' + j + '</text>';
    s += '<text class="axis" x="' + x + '" y="794">' + j + '</text>';
  }
  s += '<circle cx="675" cy="180" r="5.5" fill="#f01010"/>';
  var boxes = [
    [717, 148, "#f0f0ff", ["IOBANK_7D", "(0 assignable)"]],
    [780, 148, "#f0e4f0", ["IOBANK_9A", "(0 assignable)"]],
    [843.5, 148, "#f4fff4", ["IOBANK_7C", "(0 assignable)"]],
    [907, 148, "#f2f2e4", ["IOBANK_8A", "(0 assigned/5 assignable)"]],
    [970, 148, "#fff0f0", ["IOBANK_7B", "(0 assignable)"]],
    [1054, 148, "#fffff0", ["IOBANK_7A", "(0 assignable)"]],
    [1296.5, 337, "#d8f0f0", ["IOBANK_6A", "(0 assignable)"]],
    [1296.5, 527, "#e2e2fa", ["IOBANK_6B", "(0 assignable)"]],
    [1296.5, 590, "#ffffcc", ["IOBANK_5B", "(0 assigned/7 assignable)"]],
    [1296.5, 653, "#e0ffcc", ["IOBANK_5A", "(0 assigned/16 assignable)"]],
    [770.5, 800.5, "#ffccff", ["IOBANK_3A", "(0 assigned/16 assignable)"]],
    [833.5, 800.5, "#e2e4ca", ["IOBANK_3B", "(1 assigned/32 assignable)", "(1 input/0 output/0 bidir)"]],
    [1013, 800.5, "#f5dfcd", ["IOBANK_4A", "(1 assigned/64 assignable)", "(1 input/0 output/0 bidir)"]]
  ];
  boxes.forEach(function (b) {
    s += '<rect class="bankbox" x="' + b[0] + '" y="' + b[1] + '" width="63" height="21" fill="' + b[2] + '"/>';
    var three = b[3].length == 3;
    b[3].forEach(function (line, k) {
      s += '<text class="banktext" x="' + (b[0] + 31.5) + '" y="' + (b[1] + (three ? 6 + k * 7 : 9 + k * 9)) + '">' + line + '</text>';
    });
  });
  document.getElementById('chip').innerHTML = s;
}

function dot(cls) { return '<circle class="pin ' + cls + '" cx="10.5" cy="10.5" r="8.4"/>'; }
var LEGEND = [
 [dot(''), 'User I/O'],
 [dot('filled fill-user'), 'User assigned I...'],
 [dot('filled fill-fitter'), 'Fitter assigned I...'],
 [dot('filled fill-unbonded'), 'Unbonded pad'],
 [dot('filled fill-reserved'), 'Reserved pin'],
 ['E', 'DEV_OE'], ['hn', 'DIFF_n'], ['hp', 'DIFF_p'], ['N', 'DIFF_n output'], ['R', 'DIFF_p output'],
 ['Q', 'DQ'], ['S', 'DQS'], ['s', 'DQSB'], ['P', 'Hard processor ...'], ['cn', 'CLK_n'], ['cp', 'CLK_p'],
 ['L', 'Other PLL'], ['D', 'Other dual purp...'],
 ['50', 'MSEL0'], ['51', 'MSEL1'], ['52', 'MSEL2'], ['53', 'MSEL3'], ['5D', 'CONF_DONE'], ['5D', 'DCLK'],
 ['5E', 'nCE'], ['5F', 'nCONFIG'], ['5I', 'TDI'], ['5K', 'TCK'], ['5M', 'TMS'], ['5O', 'TDO'], ['5S', 'nSTATUS'], ['5P', 'Other dedicated']
];
function buildLegend() {
  var s = '';
  LEGEND.forEach(function (l) {
    var inner = l[0].charAt(0) == '<' ? l[0] : sym(l[0]);
    s += '<div class="lrow"><svg class="lsym" viewBox="1.5 1.5 18 18">' + inner + '</svg>' + l[1] + '</div>';
  });
  document.getElementById('legend').innerHTML = s;
}

var PINS = [
 ['in', 'clk_in', 'Input', 'PIN_V11', '3B', 'B3B_N0', 'PIN_W24', 'r-3b', ''],
 ['in', 'clr', 'Input', 'PIN_AH17', '4A', 'B4A_N0', 'PIN_Y24', 'r-4a', ''],
 ['out', 'q1d', 'Output', '', '', '', 'PIN_AB25', '', '1 (default)'],
 ['out', 's0', 'Output', '', '', '', 'PIN_W21', '', '1 (default)'],
 ['out', 's1', 'Output', '', '', '', 'PIN_AA26', '', '1 (default)'],
 ['out', 's2', 'Output', '', '', '', 'PIN_AB26', '', '1 (default)']
];
function dirIcon(d) {
  if (d == 'in') return '<svg class="dirsvg" viewBox="0 0 18 18"><text class="dirtext" x="1" y="7">in</text><path d="M1 9H10L13 13L10 17H1Z" fill="#0a4f8c"/><path d="M13 13H18" stroke="#e02020"/></svg>';
  return '<svg class="dirsvg" viewBox="0 0 18 18"><text class="dirtext" x="1" y="7">out</text><path d="M5 9H14L17 13L14 17H5Z" fill="#0a4f8c"/><path d="M0 13H5" stroke="#e02020"/></svg>';
}
function blank(n) { var s = ''; while (n-- > 0) s += '<td></td>'; return s; }
function buildTable() {
  var s = '';
  PINS.forEach(function (p) {
    s += '<tr class="' + p[7] + '"><td class="cname"><div class="tname">' + dirIcon(p[0]) + p[1] + '</div></td>';
    s += '<td>' + p[2] + '</td><td>' + p[3] + '</td><td>' + p[4] + '</td><td>' + p[5] + '</td><td>' + p[6] + '</td>';
    s += '<td>2.5 V (default)</td><td></td><td>12mA (default)</td><td>' + p[8] + '</td>' + blank(8) + '</tr>';
  });
  s += '<tr><td class="cname">&lt;&lt;new node&gt;&gt;</td>' + blank(17) + '</tr>';
  document.getElementById('pinrows').innerHTML = s;
}
buildChip();
buildLegend();
buildTable();
```
